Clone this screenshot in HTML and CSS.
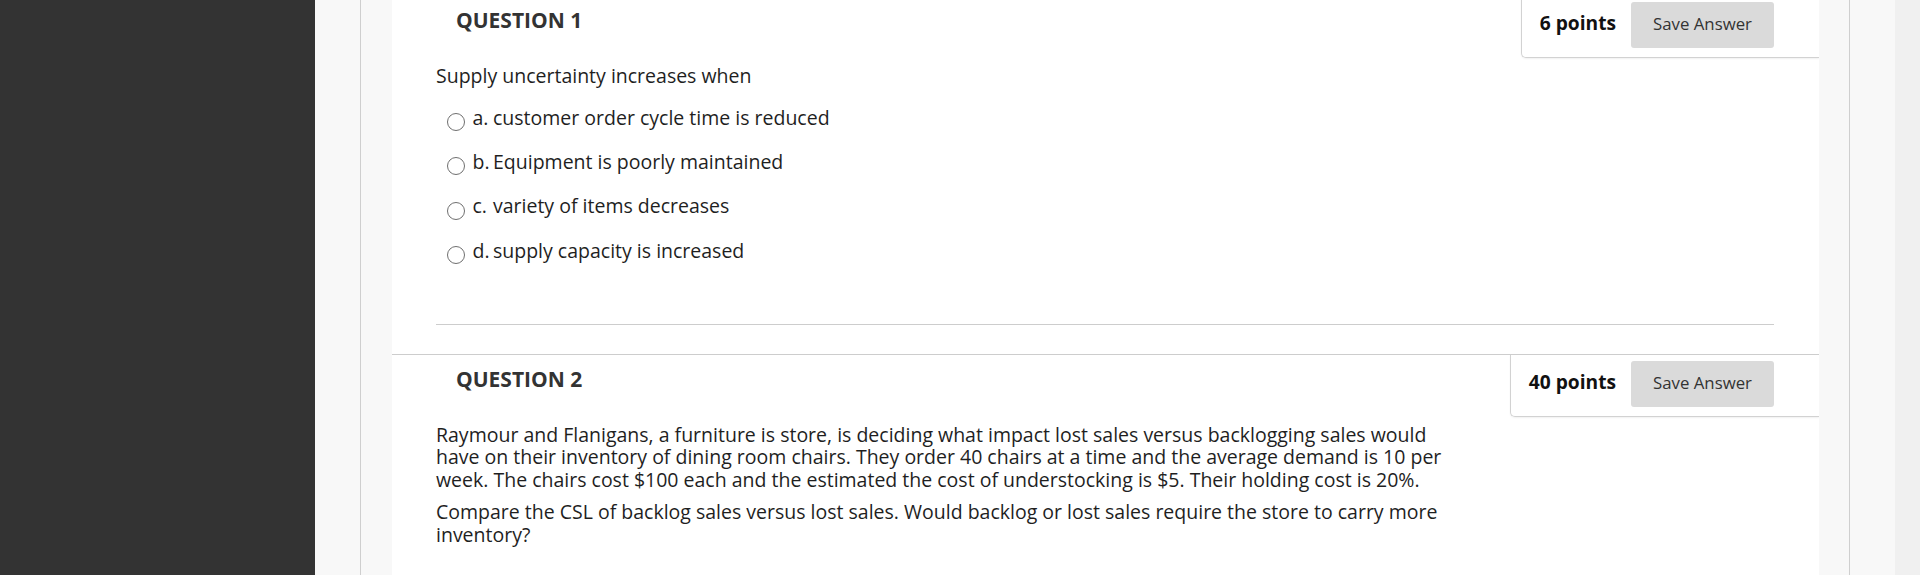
FILE: index.html
```html
<!DOCTYPE html>
<html lang="en">
<head>
<meta charset="utf-8">
<title>Test</title>
<link rel="stylesheet" href="styles.css">
</head>
<body>
<div class="page">
  <aside class="sidebar"></aside>
  <main class="outer">
    <div class="frame">
      <div class="sheet">
        <section class="question q-first">
          <div class="q-head">
            <h3 class="q-title">QUESTION 1</h3>
            <div class="q-points"><span class="pts">6 points</span><button class="save" type="button">Save Answer</button></div>
          </div>
          <div class="q-body">
            <p class="q-text">Supply uncertainty increases when</p>
            <ul class="options">
              <li class="option"><span class="radio"></span><span class="opt-label">a.</span><span class="opt-text">customer order cycle time is reduced</span></li>
              <li class="option"><span class="radio"></span><span class="opt-label">b.</span><span class="opt-text">Equipment is poorly maintained</span></li>
              <li class="option"><span class="radio"></span><span class="opt-label">c.</span><span class="opt-text">variety of items decreases</span></li>
              <li class="option"><span class="radio"></span><span class="opt-label">d.</span><span class="opt-text">supply capacity is increased</span></li>
            </ul>
            <hr class="sep">
          </div>
        </section>
        <section class="question">
          <div class="q-head">
            <h3 class="q-title">QUESTION 2</h3>
            <div class="q-points"><span class="pts">40 points</span><button class="save" type="button">Save Answer</button></div>
          </div>
          <div class="q-body">
            <p class="q-text">Raymour and Flanigans, a furniture is store, is deciding what impact lost sales versus backlogging sales would have on their inventory of dining room chairs. They order 40 chairs at a time and the average demand is 10 per week. The chairs cost $100 each and the estimated the cost of understocking is $5. Their holding cost is 20%.</p>
            <p class="q-text">Compare the CSL of backlog sales versus lost sales. Would backlog or lost sales require the store to carry more inventory?</p>
          </div>
        </section>
      </div>
    </div>
  </main>
  <div class="scrolltrack"></div>
</div>
</body>
</html>
```
FILE: styles.css
```css
html, body {
  margin: 0;
  padding: 0;
  height: 575px;
  overflow: hidden;
  font-family: "Open Sans", "Liberation Sans", sans-serif;
  color: #1f1f1f;
}

.page {
  display: flex;
  height: 575px;
}

.sidebar {
  width: 315px;
  flex: 0 0 315px;
  background: #333;
}

.outer {
  flex: 1;
  display: flex;
  background: #f8f8f8;
  padding: 0 45px;
}

.frame {
  flex: 1;
  display: flex;
  border-left: 1px solid #cfcfcf;
  border-right: 1px solid #cfcfcf;
  padding: 0 30px 0 31px;
}

.sheet {
  flex: 1;
  background: #fff;
  overflow: hidden;
}

.scrolltrack {
  width: 25px;
  flex: 0 0 25px;
  background: #f0f0f0;
}

.question {
  border-top: 1px solid #cdcdcd;
  padding: 0 45px 0 44px;
}

.q-first {
  margin-top: -5px;
}

.q-head {
  display: flex;
  justify-content: space-between;
  align-items: flex-start;
}

.q-title {
  margin: 0;
  padding: 10px 0 0 20px;
  font-size: 21px;
  font-weight: 700;
  color: #333;
  line-height: normal;
}

.q-points {
  display: flex;
  align-items: center;
  gap: 15px;
  margin-right: -45px;
  padding: 6px 45px 9px 17.5px;
  border-left: 1px solid #d2d2d2;
  border-bottom: 1px solid #d2d2d2;
  border-bottom-left-radius: 5px;
  box-shadow: 0 1px 2px rgba(0, 0, 0, 0.06);
}

.pts {
  font-size: 19.2px;
  font-weight: 700;
  color: #111;
  margin-bottom: 6px;
}

.save {
  height: 46px;
  width: 143px;
  border: none;
  border-radius: 3px;
  background: #dadada;
  color: #333;
  font-family: "Open Sans", "Liberation Sans", sans-serif;
  font-size: 16.8px;
  padding: 0 0 3px;
}

.q-body {
  padding-top: 6.5px;
}

.q-text {
  margin: 0;
  max-width: 1025px;
  font-size: 19.5px;
  line-height: 22.7px;
}

.q-text + .q-text {
  margin-top: 9.3px;
}

.options {
  list-style: none;
  margin: 8.35px 0 0;
  padding: 0;
}

.option {
  display: flex;
  align-items: flex-start;
  padding: 11px 0;
  font-size: 19.5px;
  line-height: 22.4px;
}

.radio {
  width: 16px;
  height: 16px;
  flex: 0 0 16px;
  border: 1px solid #6f6f6f;
  border-radius: 50%;
  margin: 6.5px 8px -10px 10.5px;
  background: #fff;
}

.opt-label {
  width: 20.5px;
  flex: 0 0 20.5px;
}

.sep {
  height: 0;
  border: none;
  border-top: 1px solid #cdcdcd;
  margin: 51px 0 29px;
}
```
